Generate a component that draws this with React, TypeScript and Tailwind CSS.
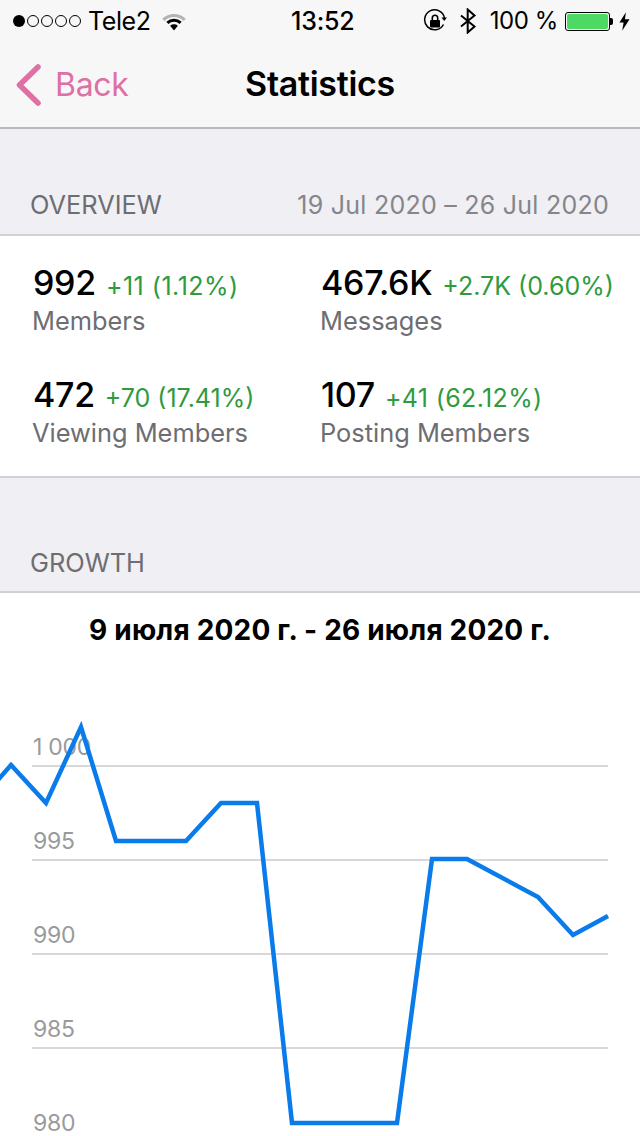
const font = { fontFamily: 'Inter, "Liberation Sans", sans-serif' };

function Stat({ value, delta, label, deltaClass = "tracking-[0px]" }: { value: string; delta: string; label: string; deltaClass?: string }) {
  return (
    <div className="h-[112px]">
      <div className="-mt-[1px] flex h-[40px] items-baseline gap-[10px] whitespace-nowrap">
        <span className="text-[34px] leading-[40px] font-medium tracking-[-0.3px] text-black">{value}</span>
        <span className={`text-[25px] leading-[40px] text-[#2f9a3e] ${deltaClass}`}>{delta}</span>
      </div>
      <div className="mt-[3px] -ml-[1px] text-[25.4px] leading-[30px] text-[#6d6d72]">{label}</div>
    </div>
  );
}

function GridRow({ label }: { label: string }) {
  return (
    <div className="flex h-[94px] flex-col justify-end">
      <div className="mb-[1px] pl-[1px] text-[23px] leading-[34px] tracking-[-0.3px] text-[#9a9a9a]">{label}</div>
      <div className="h-[2px] bg-[#d8d8d8]"></div>
    </div>
  );
}

export default function App() {
  return (
    <div className="relative h-[1136px] w-[640px] overflow-hidden bg-white" style={font}>
      <div className="h-[129px] border-b-2 border-[#b8b8c0] bg-[#f7f7f7]">
        <div className="flex h-[42px] items-center pl-[13px] pr-[10px] text-[25px] leading-[40px] text-black">
          <div className="flex items-center gap-[2px]">
            <span className="h-[12px] w-[12px] rounded-full bg-black"></span>
            {[0, 1, 2, 3].map((i) => (
              <span key={i} className="h-[12px] w-[12px] rounded-full border border-black"></span>
            ))}
          </div>
          <span className="ml-[7px] tracking-[-0.4px]">Tele2</span>
          <svg className="ml-[11px]" width="24" height="19" viewBox="1 0 24 19.5">
            <path d="M2 8 A16 16 0 0 1 24 8" fill="none" stroke="#b3b3b3" strokeWidth="3.2" />
            <path d="M6.2 11.2 A10 10 0 0 1 19.8 11.2" fill="none" stroke="#000" strokeWidth="3.2" />
            <path d="M9 14 A6 6 0 0 1 17 14 L13 19 Z" fill="#000" />
          </svg>
          <span className="absolute left-[291px] font-medium tracking-[-0.2px]">13:52</span>
          <div className="ml-auto flex items-center">
            <svg width="24" height="24" viewBox="0 0 24 24" fill="none">
              <path d="M20.5 15.5 A10 10 0 1 1 21.5 9" stroke="#000" strokeWidth="1.5" />
              <path d="M18.5 8.5 L24 8.5 L21.2 12 Z" fill="#000" />
              <rect x="7" y="11" width="10" height="7.5" rx="1" fill="#000" />
              <path d="M9.3 11 V9 a2.7 2.7 0 0 1 5.4 0 V11" stroke="#000" strokeWidth="1.6" />
            </svg>
            <svg className="ml-[12px]" width="18" height="26" viewBox="0 0 18 26" fill="none">
              <path d="M2 7.5 L15.5 18.5 L8.7 24.5 V1.5 L15.5 7.5 L2 18.5" stroke="#000" strokeWidth="2" />
            </svg>
            <span className="ml-[13px] text-[24px] tracking-[-0.4px]">100 %</span>
            <div className="ml-[7px] flex items-center">
              <div className="h-[19px] w-[45px] rounded-[3px] border border-black p-[1px]">
                <div className="h-full w-full rounded-[2px] bg-[#4cd964]"></div>
              </div>
              <div className="h-[7px] w-[3px] rounded-r-[2px] bg-black"></div>
            </div>
            <svg className="ml-[6px]" width="11" height="19" viewBox="0 0 12 20">
              <path d="M7.5 0 L0.5 11 H5 L3.5 20 L11.5 7.5 H6.5 Z" fill="#000" />
            </svg>
          </div>
        </div>
        <div className="relative flex h-[85px] items-center justify-center">
          <div className="absolute left-[16px] top-[21px] flex items-center">
            <svg width="26" height="44" viewBox="0 0 26 44" fill="none">
              <path d="M22 4 L3.5 22 L22 40" stroke="#de70a6" strokeWidth="5.5" strokeLinecap="round" strokeLinejoin="round" />
            </svg>
            <span className="ml-[13px] text-[32px] leading-[44px] tracking-[-0.3px] text-[#de70a6]">Back</span>
          </div>
          <span className="-mt-[2px] text-[34px] leading-[44px] font-semibold tracking-[-0.3px] text-black">Statistics</span>
        </div>
      </div>

      <div className="flex h-[107px] items-end justify-between border-b-2 border-[#d0d0d5] bg-[#efeff4] pl-[30px] pr-[31px] pb-[12px] text-[25.4px] leading-[34px] text-[#6d6d72]">
        <span>OVERVIEW</span>
        <span className="text-[25px] tracking-[0.25px] text-[#85858a]">19 Jul 2020 – 26 Jul 2020</span>
      </div>

      <div className="grid h-[242px] grid-cols-[288px_1fr] border-b-2 border-[#d0d0d5] px-[33px] pt-[28px]">
        <Stat value="992" delta="+11 (1.12%)" label="Members" deltaClass="tracking-[0.5px]" />
        <Stat value="467.6K" delta="+2.7K (0.60%)" label="Messages" />
        <Stat value="472" delta="+70 (17.41%)" label="Viewing Members" />
        <Stat value="107" delta="+41 (62.12%)" label="Posting Members" deltaClass="tracking-[0.35px]" />
      </div>

      <div className="flex h-[115px] items-end border-b-2 border-[#d0d0d5] bg-[#efeff4] pl-[30px] pb-[11px] text-[25.4px] leading-[34px] text-[#6d6d72]">
        GROWTH
      </div>

      <div className="relative h-[544px]">
        <div className="pt-[20px] text-center text-[28px] leading-[34px] font-bold tracking-[0.2px] text-black">
          9 июля 2020 г. - 26 июля 2020 г.
        </div>
        <div className="ml-[32px] mr-[32px] mt-[26px]">
          <GridRow label="1 000" />
          <GridRow label="995" />
          <GridRow label="990" />
          <GridRow label="985" />
          <GridRow label="980" />
        </div>
        <svg className="absolute left-0 top-0" width="640" height="544" viewBox="0 593 640 544" fill="none">
          <path
            d="M-3 781 L11 765 L46 803 L81 727 L116 841 L186 841 L221 803 L257 803 L292 1123 L397 1123 L432 859 L467 859 L538 897 L573 935 L608 916"
            stroke="#0a7bea"
            strokeWidth="4.5"
            strokeLinejoin="miter"
          />
        </svg>
      </div>
    </div>
  );
}
